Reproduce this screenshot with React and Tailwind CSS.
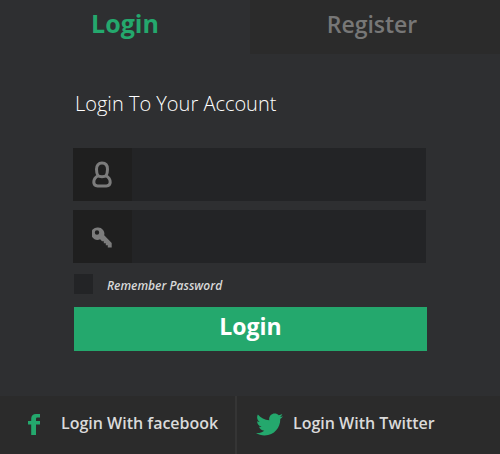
import { FaTwitter } from "react-icons/fa";

function UserIcon() {
  return (
    <svg width="20" height="29" viewBox="0 0 20 29" fill="none" stroke="#7c7c7c" strokeWidth="3" strokeLinejoin="round" aria-hidden="true">
      <path d="M6 14.800C4.900 13 4.500 10.800 4.500 8.200C4.500 4.400 6.500 2 10 2C13.500 2 15.500 4.400 15.500 8.200C15.500 10.800 15.100 13 14 14.800C12.600 15.900 7.400 15.900 6 14.800Z" />
      <path d="M6 14.800C3.400 16.200 1.800 18.600 1.800 21.300C1.800 23.900 3.300 24.900 5.600 24.900H14.400C16.700 24.900 18.200 23.900 18.200 21.300C18.200 18.600 16.600 16.200 14 14.800" />
    </svg>
  );
}

function KeyIcon() {
  return (
    <svg width="20" height="21" viewBox="0 0 20 21" fill="#7c7c7c" aria-hidden="true">
      <path
        fillRule="evenodd"
        d="M6.200 0.500a6.200 6.200 0 0 1 6 7.700L19.700 16V20.500H15.800V18.300H13.800V16.200H11.800V14.200H10L8.100 12.200A6.200 6.200 0 1 1 6.200 0.500ZM5 3.300a2.200 2.200 0 1 0 0 4.400a2.200 2.200 0 0 0 0-4.400Z"
      />
    </svg>
  );
}

function FacebookIcon() {
  return (
    <svg className="mt-0.5" width="12" height="21" viewBox="0 0 12 21" fill="#24a86d" aria-hidden="true">
      <path d="M12 0V3.600H9.600C8.300 3.600 8 4.200 8 5.200V7H12V10.600H8V21H3.200V10.600H0V7H3.200V4.800C3.200 1.700 5 0 8 0Z" />
    </svg>
  );
}

function Field({ id, label, type, icon }) {
  return (
    <div className="flex h-[53px] bg-[#232426]">
      <label htmlFor={id} aria-label={label} className="flex w-[59px] shrink-0 items-center justify-center bg-[#1f1f1f] pt-0.5 pr-0.5">
        {icon}
      </label>
      <input
        id={id}
        type={type}
        className="min-w-0 flex-1 bg-transparent px-4 text-base text-[#dcdcdc] outline-none"
      />
    </div>
  );
}

export default function App() {
  return (
    <main className="flex min-h-screen flex-col bg-[#2e2f31] font-['Open_Sans','Noto_Sans',sans-serif]">
      <nav className="grid h-[54px] grid-cols-2">
        <button type="button" className="pb-1.5 text-[25px] font-bold text-[#24a86d]">Login</button>
        <button type="button" className="bg-[#2b2b2b] pb-1.5 pr-1.5 text-[23px] font-semibold text-[#777777]">Register</button>
      </nav>

      <form className="flex flex-col px-[73px] pt-9" onSubmit={(e) => e.preventDefault()}>
        <h1 className="mb-[30px] pl-0.5 text-xl font-light text-white">Login To Your Account</h1>
        <div className="flex flex-col gap-[9px] pr-px">
          <Field id="username" label="Username" type="text" icon={<UserIcon />} />
          <Field id="password" label="Password" type="password" icon={<KeyIcon />} />
        </div>
        <div className="mt-[11px] flex h-5 items-center gap-3.5 pl-px">
          <input
            id="remember"
            type="checkbox"
            className="h-5 w-[19px] appearance-none bg-[#232426] checked:bg-[#24a86d]"
          />
          <label htmlFor="remember" className="pt-1 text-xs font-semibold italic text-[#d8d8d8]">
            Remember Password
          </label>
        </div>
        <button type="submit" className="mt-[13px] ml-px h-11 bg-[#24a86d] pb-1.5 text-[23px] font-bold text-white">
          Login
        </button>
      </form>

      <footer className="mt-auto flex h-[58px] bg-[#2b2b2b] text-base font-semibold text-[#dadada]">
        <a href="#facebook" className="flex w-[237px] items-center gap-[21px] border-r-2 border-[#353535] pb-1 pl-7 whitespace-nowrap">
          <FacebookIcon />
          Login With facebook
        </a>
        <a href="#twitter" className="flex flex-1 items-center gap-2.5 pb-1 pl-[19px] whitespace-nowrap">
          <FaTwitter className="mt-0.5" size={27} color="#24a86d" aria-hidden="true" />
          Login With Twitter
        </a>
      </footer>
    </main>
  );
}
